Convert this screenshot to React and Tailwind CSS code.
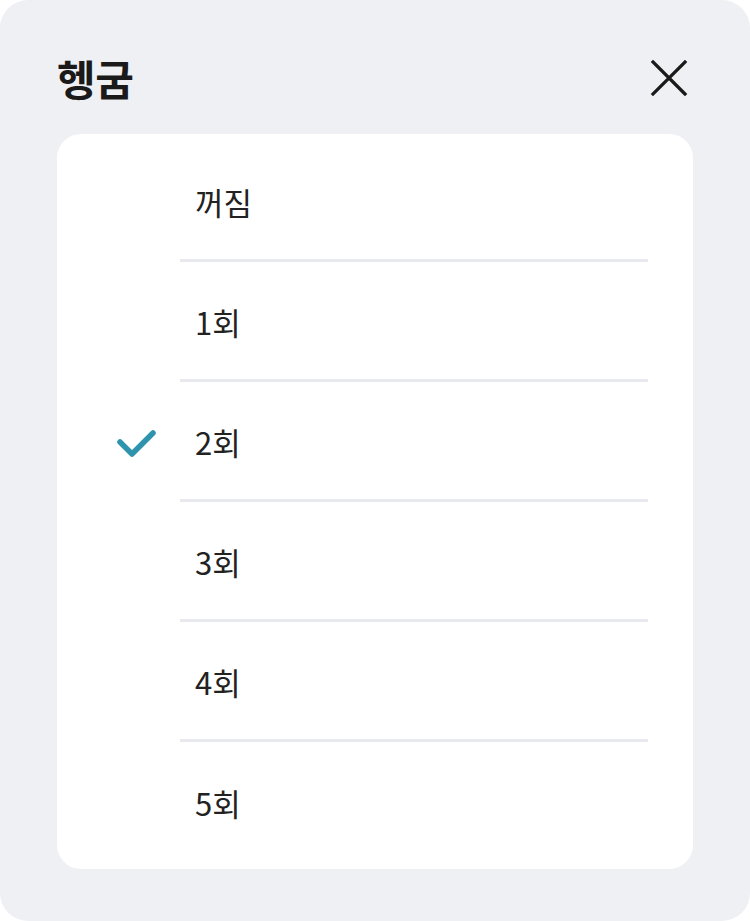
import React from "react";

const items = ["꺼짐", "1회", "2회", "3회", "4회", "5회"];
const selected = 2;

export default function App() {
  return (
    <div className="w-[750px] h-[921px] bg-white" style={{ fontFamily: '"Noto Sans CJK KR", "Noto Sans", sans-serif' }}>
      <div className="w-full h-full bg-[#eff0f4] rounded-[28px] flex flex-col px-[57px]">
        <div className="h-[134px] flex items-center justify-between pt-[22px]">
          <h1 className="text-[42px] font-bold text-[#1a1a1a] leading-none tracking-[-0.5px]">헹굼</h1>
          <svg width="38" height="38" viewBox="0 0 38 38" className="mr-[5px]">
            <path d="M3 3 L35 35 M35 3 L3 35" stroke="#1a1a1a" strokeWidth="3.2" strokeLinecap="square" />
          </svg>
        </div>
        <div className="bg-white rounded-[24px] pt-[8px] pb-[7px]">
          {items.map((t, i) => (
            <div key={t} className="flex h-[120px]">
              <div className="w-[123px] flex items-center justify-end pr-[21px] pt-[3px]">
                {i === selected && (
                  <svg width="44" height="30" viewBox="0 0 44 30">
                    <path d="M5 13 L17 25 L38 4" fill="none" stroke="#2e93ac" strokeWidth="5.5" strokeLinecap="round" strokeLinejoin="round" />
                  </svg>
                )}
              </div>
              <div className={`flex-1 mr-[45px] flex items-center pl-[15px] pt-[1px] ${i < items.length - 1 ? "border-b-[3px] border-[#e8e9ef]" : ""}`}>
                <span className="text-[31px] text-[#222222] leading-none">{t}</span>
              </div>
            </div>
          ))}
        </div>
      </div>
    </div>
  );
}
